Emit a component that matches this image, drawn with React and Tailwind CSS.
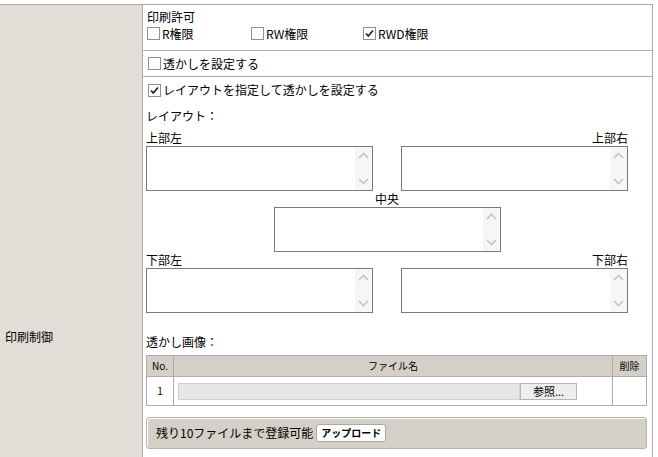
import React from 'react'

function Box({ checked }) {
  return (
    <span className="inline-flex h-[13px] w-[13px] shrink-0 items-center justify-center border border-[#8e8f8f] bg-white">
      {checked && (
        <svg width="9" height="9" viewBox="0 0 9 9">
          <path d="M1 4.5 L3.3 7 L8 1.5" fill="none" stroke="#222" strokeWidth="1.7" />
        </svg>
      )}
    </span>
  )
}

function Area() {
  return (
    <div className="flex h-[45px] w-[227px] border border-[#7a7a7a] bg-white">
      <div className="flex-1" />
      <div className="flex w-[17px] flex-col items-center justify-between bg-[#f6f6f6] py-[5px]">
        <svg width="11" height="7" viewBox="0 0 11 7">
          <path d="M1 6 L5.5 1.5 L10 6" fill="none" stroke="#c4c4c4" strokeWidth="1.6" />
        </svg>
        <svg width="11" height="7" viewBox="0 0 11 7">
          <path d="M1 1 L5.5 5.5 L10 1" fill="none" stroke="#c4c4c4" strokeWidth="1.6" />
        </svg>
      </div>
    </div>
  )
}

export default function App() {
  return (
    <div className="h-[457px] w-[658px] overflow-hidden bg-white pt-[4px] font-['Noto_Sans_CJK_JP','Liberation_Sans',sans-serif] text-[12px] leading-[16px] text-black">
      <div className="flex h-[664px] w-[653px] border-t border-[#acacac]">
        {/* Label column */}
        <div className="flex w-[143px] items-center border-r border-[#acacac] bg-[#e3ddd8] pl-[5px]">
          印刷制御
        </div>

        {/* Settings column */}
        <div className="flex flex-1 flex-col border-r border-[#acacac]">
          <div className="h-[46px] border-b border-[#acacac] pl-[4px] pt-[4px]">
            <div>印刷許可</div>
            <div className="flex h-[17px] items-center">
              <div className="flex w-[104px] items-center gap-[2px]">
                <Box />
                <span>R権限</span>
              </div>
              <div className="flex w-[112px] items-center gap-[2px]">
                <Box />
                <span>RW権限</span>
              </div>
              <div className="flex items-center gap-[2px]">
                <Box checked />
                <span>RWD権限</span>
              </div>
            </div>
          </div>

          <div className="flex h-[26px] items-center gap-[2px] border-b border-[#acacac] pl-[5px]">
            <Box />
            <span>透かしを設定する</span>
          </div>

          <div className="flex flex-col pl-[3px] pt-[5px]">
            <div className="flex h-[16px] items-center gap-[2px] pl-[2px]">
              <Box checked />
              <span>レイアウトを指定して透かしを設定する</span>
            </div>
            <div className="mt-[10px]">レイアウト：</div>

            <div className="mt-[6px] w-[482px]">
              <div className="flex justify-between">
                <div>
                  <div>上部左</div>
                  <Area />
                </div>
                <div className="flex flex-col items-end">
                  <div>上部右</div>
                  <Area />
                </div>
              </div>
              <div className="flex flex-col items-center">
                <div>中央</div>
                <Area />
              </div>
              <div className="flex justify-between">
                <div>
                  <div>下部左</div>
                  <Area />
                </div>
                <div className="flex flex-col items-end">
                  <div>下部右</div>
                  <Area />
                </div>
              </div>
            </div>

            <div className="mt-[21px]">透かし画像：</div>

            <div className="mt-[5px] w-[501px] border border-[#acacac] text-[10px]">
              <div className="flex h-[20px] bg-[#d4d0c8]">
                <div className="flex w-[27px] items-center justify-center border-r border-[#acacac]">No.</div>
                <div className="flex flex-1 items-center justify-center border-r border-[#acacac]">ファイル名</div>
                <div className="flex w-[33px] items-center justify-center">削除</div>
              </div>
              <div className="flex h-[29px] border-t border-[#acacac]">
                <div className="flex w-[27px] items-center justify-center border-r border-[#acacac]">1</div>
                <div className="flex flex-1 items-center border-r border-[#acacac] pl-[4px]">
                  <div className="h-[17px] w-[342px] border border-[#d0d0d0] bg-[#e6e6e6]" />
                  <div className="flex h-[17px] w-[57px] items-center justify-center border border-[#b5b5b5] bg-[#eeeeee] text-[11px]">
                    参照...
                  </div>
                </div>
                <div className="w-[33px]" />
              </div>
            </div>

            <div className="mt-[11px] flex h-[32px] w-[501px] items-center gap-[3px] rounded-[3px] border border-[#b9b4ab] bg-[#d4d0c8] pl-[9px] shadow-[inset_1px_1px_0_#ffffff]">
              <span>残り10ファイルまで登録可能</span>
              <span className="flex h-[18px] items-center rounded-[3px] border border-[#a8a8a8] bg-white px-[4px] text-[10px] font-bold">
                アップロード
              </span>
            </div>
          </div>
        </div>
      </div>
    </div>
  )
}
